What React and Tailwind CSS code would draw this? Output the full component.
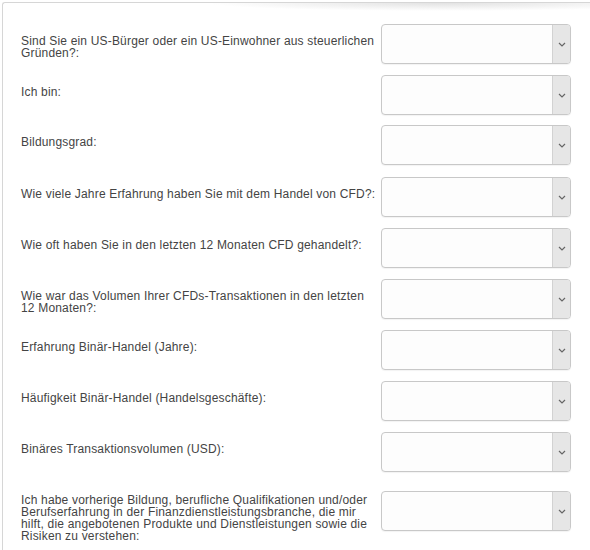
import React from "react";

const rows = [
  { mt: 0, pt: 11, lines: ["Sind Sie ein US-Bürger oder ein US-Einwohner aus steuerlichen", "Gründen?:"] },
  { mt: 11, pt: 11, lines: ["Ich bin:"] },
  { mt: 10, pt: 11, lines: ["Bildungsgrad:"] },
  { mt: 12, pt: 11, lines: ["Wie viele Jahre Erfahrung haben Sie mit dem Handel von CFD?:"] },
  { mt: 11, pt: 11, lines: ["Wie oft haben Sie in den letzten 12 Monaten CFD gehandelt?:"] },
  { mt: 11, pt: 11, lines: ["Wie war das Volumen Ihrer CFDs-Transaktionen in den letzten", "12 Monaten?:"] },
  { mt: 11, pt: 11, lines: ["Erfahrung Binär-Handel (Jahre):"] },
  { mt: 11, pt: 11, lines: ["Häufigkeit Binär-Handel (Handelsgeschäfte):"] },
  { mt: 11, pt: 11, lines: ["Binäres Transaktionsvolumen (USD):"] },
  {
    mt: 19,
    pt: 3,
    lines: [
      "Ich habe vorherige Bildung, berufliche Qualifikationen und/oder",
      "Berufserfahrung in der Finanzdienstleistungsbranche, die mir",
      "hilft, die angebotenen Produkte und Dienstleistungen sowie die",
      "Risiken zu verstehen:",
    ],
  },
];

function SelectBox() {
  return (
    <div className="flex h-[40px] w-[190px] shrink-0 overflow-hidden rounded-[4px] border border-[#c8c8c8] bg-[#fdfdfd] shadow-[0_1px_1px_rgba(0,0,0,0.05)]">
      <div className="flex-1" />
      <div className="flex w-[18px] items-center justify-center border-l border-[#d2d2d2] bg-[#e6e6e6]">
        <svg width="8" height="5" viewBox="0 0 8 5" fill="none">
          <path d="M1 1 L4 4 L7 1" stroke="#666" strokeWidth="1.2" />
        </svg>
      </div>
    </div>
  );
}

export default function App() {
  return (
    <div className="h-[550px] w-[590px] overflow-hidden bg-white font-['Liberation_Sans',Arial,sans-serif]">
      <div className="ml-[2px] mt-[2px] h-[560px] rounded-tl-[3px] border-l border-t border-[#d6d6d6]">
        <div className="h-[8px] bg-[radial-gradient(ellipse_40%_100%_at_75%_0%,#e2e2e2,transparent)]" />
        <div className="flex flex-col pt-[13px]">
          {rows.map((r, i) => (
            <div key={i} className="flex items-start" style={{ marginTop: r.mt }}>
              <div
                className="w-[378px] shrink-0 pl-[18px] text-[12px] leading-[12px] tracking-[0.18px] text-[#444] whitespace-nowrap"
                style={{ paddingTop: r.pt }}
              >
                {r.lines.map((l, j) => (
                  <div key={j}>{l}</div>
                ))}
              </div>
              <SelectBox />
            </div>
          ))}
        </div>
      </div>
    </div>
  );
}
